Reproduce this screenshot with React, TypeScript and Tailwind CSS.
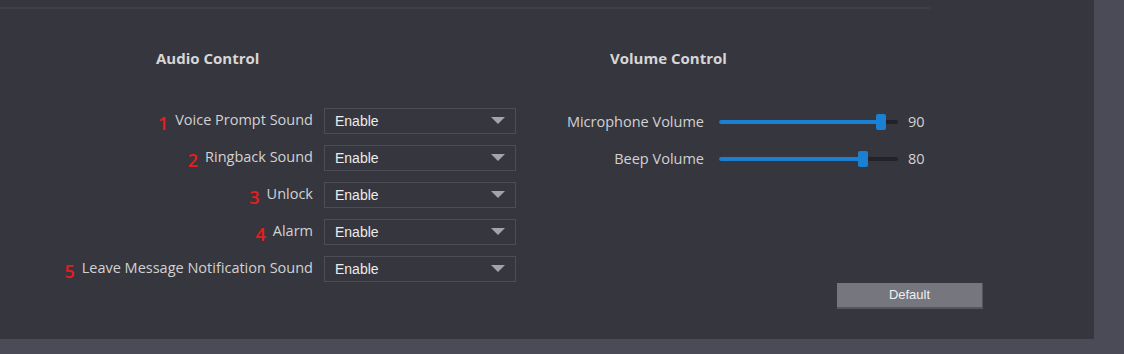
const audioRows = [
  { n: '1', label: 'Voice Prompt Sound' },
  { n: '2', label: 'Ringback Sound' },
  { n: '3', label: 'Unlock' },
  { n: '4', label: 'Alarm' },
  { n: '5', label: 'Leave Message Notification Sound' },
]

const volumeRows = [
  { label: 'Microphone Volume', value: 90 },
  { label: 'Beep Volume', value: 80 },
]

function Select({ value }: { value: string }) {
  return (
    <div className="w-[192px] h-[26px] border border-[#4d4d57] flex items-center justify-between pl-[10px] pr-[10px]">
      <span className="text-[14px] text-[#ececec] font-['Liberation_Sans',Arial,sans-serif]">{value}</span>
      <svg width="14" height="8" viewBox="0 0 14 8">
        <path d="M0 0 L14 0 L7 7 Z" fill="#a3a3ad" />
      </svg>
    </div>
  )
}

function Slider({ value }: { value: number }) {
  const pct = value / 100
  return (
    <div className="relative w-[179px] h-[16px] flex items-center">
      <div className="w-full h-[4px] rounded-full bg-[#222228]" />
      <div
        className="absolute left-0 h-[4px] rounded-full bg-[#1a80d4]"
        style={{ width: `${pct * 179}px` }}
      />
      <div
        className="absolute top-0 w-[10px] h-[16px] rounded-[2px] bg-[#1a80d4]"
        style={{ left: `${pct * 179 - 4}px` }}
      />
    </div>
  )
}

export default function App() {
  return (
    <div className="w-full h-[354px] bg-[#4b4a57] font-['Open_Sans',sans-serif]">
      <div className="w-[1094px] h-[339px] bg-[#36363f] pt-[7px]">
        {/* Divider */}
        <div className="w-[930px] h-[2px] bg-[#3f3f49]" />

        <div className="flex">
          {/* Audio Control */}
          <div className="w-[516px]">
            <h2 className="mt-[39px] ml-[156px] h-[20px] leading-[20px] text-[15px] font-bold text-[#d6d6d6]">
              Audio Control
            </h2>
            <div className="mt-[40px] flex flex-col gap-[11px]">
              {audioRows.map((row) => (
                <div key={row.n} className="flex items-center justify-end h-[26px]">
                  <span className="text-[18px] font-semibold leading-none text-[#e41e1e] mr-[7px] mt-[4px]">{row.n}</span>
                  <span className="text-[14.5px] leading-none text-[#d2d2d2] mr-[11px] -mt-[2px]">
                    {row.label}
                  </span>
                  <Select value="Enable" />
                </div>
              ))}
            </div>
          </div>

          {/* Volume Control */}
          <div className="ml-[94px] w-[400px]">
            <h2 className="mt-[39px] h-[20px] leading-[20px] text-[15px] font-bold text-[#d6d6d6]">
              Volume Control
            </h2>
            <div className="mt-[41px] -ml-[110px] flex flex-col gap-[11px]">
              {volumeRows.map((row) => (
                <div key={row.label} className="flex items-center h-[26px]">
                  <span className="w-[204px] text-right text-[14.5px] text-[#d2d2d2]">{row.label}</span>
                  <div className="ml-[15px]">
                    <Slider value={row.value} />
                  </div>
                  <span className="ml-[10px] text-[14.5px] text-[#d2d2d2]">{row.value}</span>
                </div>
              ))}
            </div>
            <button className="mt-[111px] ml-[227px] w-[146px] h-[26px] bg-[#76767f] border-b-2 border-r border-[#55555f] text-[13px] text-[#efefef] font-['Liberation_Sans',Arial,sans-serif]">
              Default
            </button>
          </div>
        </div>
      </div>
    </div>
  )
}
